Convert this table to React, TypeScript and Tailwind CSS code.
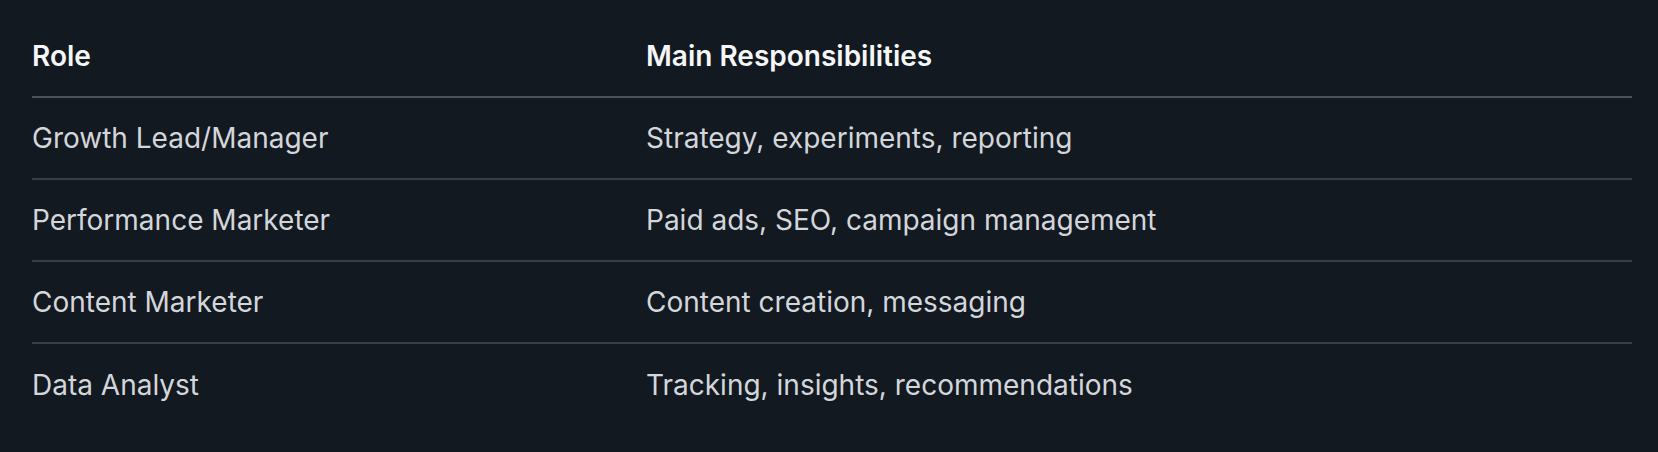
import React from "react";

const rows = [
  ["Growth Lead/Manager", "Strategy, experiments, reporting"],
  ["Performance Marketer", "Paid ads, SEO, campaign management"],
  ["Content Marketer", "Content creation, messaging"],
  ["Data Analyst", "Tracking, insights, recommendations"],
];

export default function App() {
  return (
    <div
      className="w-[1658px] h-[452px] bg-[#131920] pt-4 pl-8"
      style={{ fontFamily: "Inter, 'Noto Sans', sans-serif" }}
    >
      <table className="w-[1600px] border-collapse">
        <thead>
          <tr className="border-b-2 border-[#4b5260]">
            <th className="w-[614px] h-[81px] p-0 text-left align-middle text-[28px] font-semibold text-[#f5f6f7]">
              Role
            </th>
            <th className="h-[81px] p-0 text-left align-middle text-[28px] font-semibold text-[#f5f6f7]">
              Main Responsibilities
            </th>
          </tr>
        </thead>
        <tbody>
          {rows.map(([a, b], i) => (
            <tr
              key={a}
              className={i < rows.length - 1 ? "border-b-2 border-[#373e49]" : ""}
            >
              <td className="h-[82px] p-0 align-middle text-[28px] text-[#d3d6db]">{a}</td>
              <td className="h-[82px] p-0 align-middle text-[28px] text-[#d3d6db]">{b}</td>
            </tr>
          ))}
        </tbody>
      </table>
    </div>
  );
}
